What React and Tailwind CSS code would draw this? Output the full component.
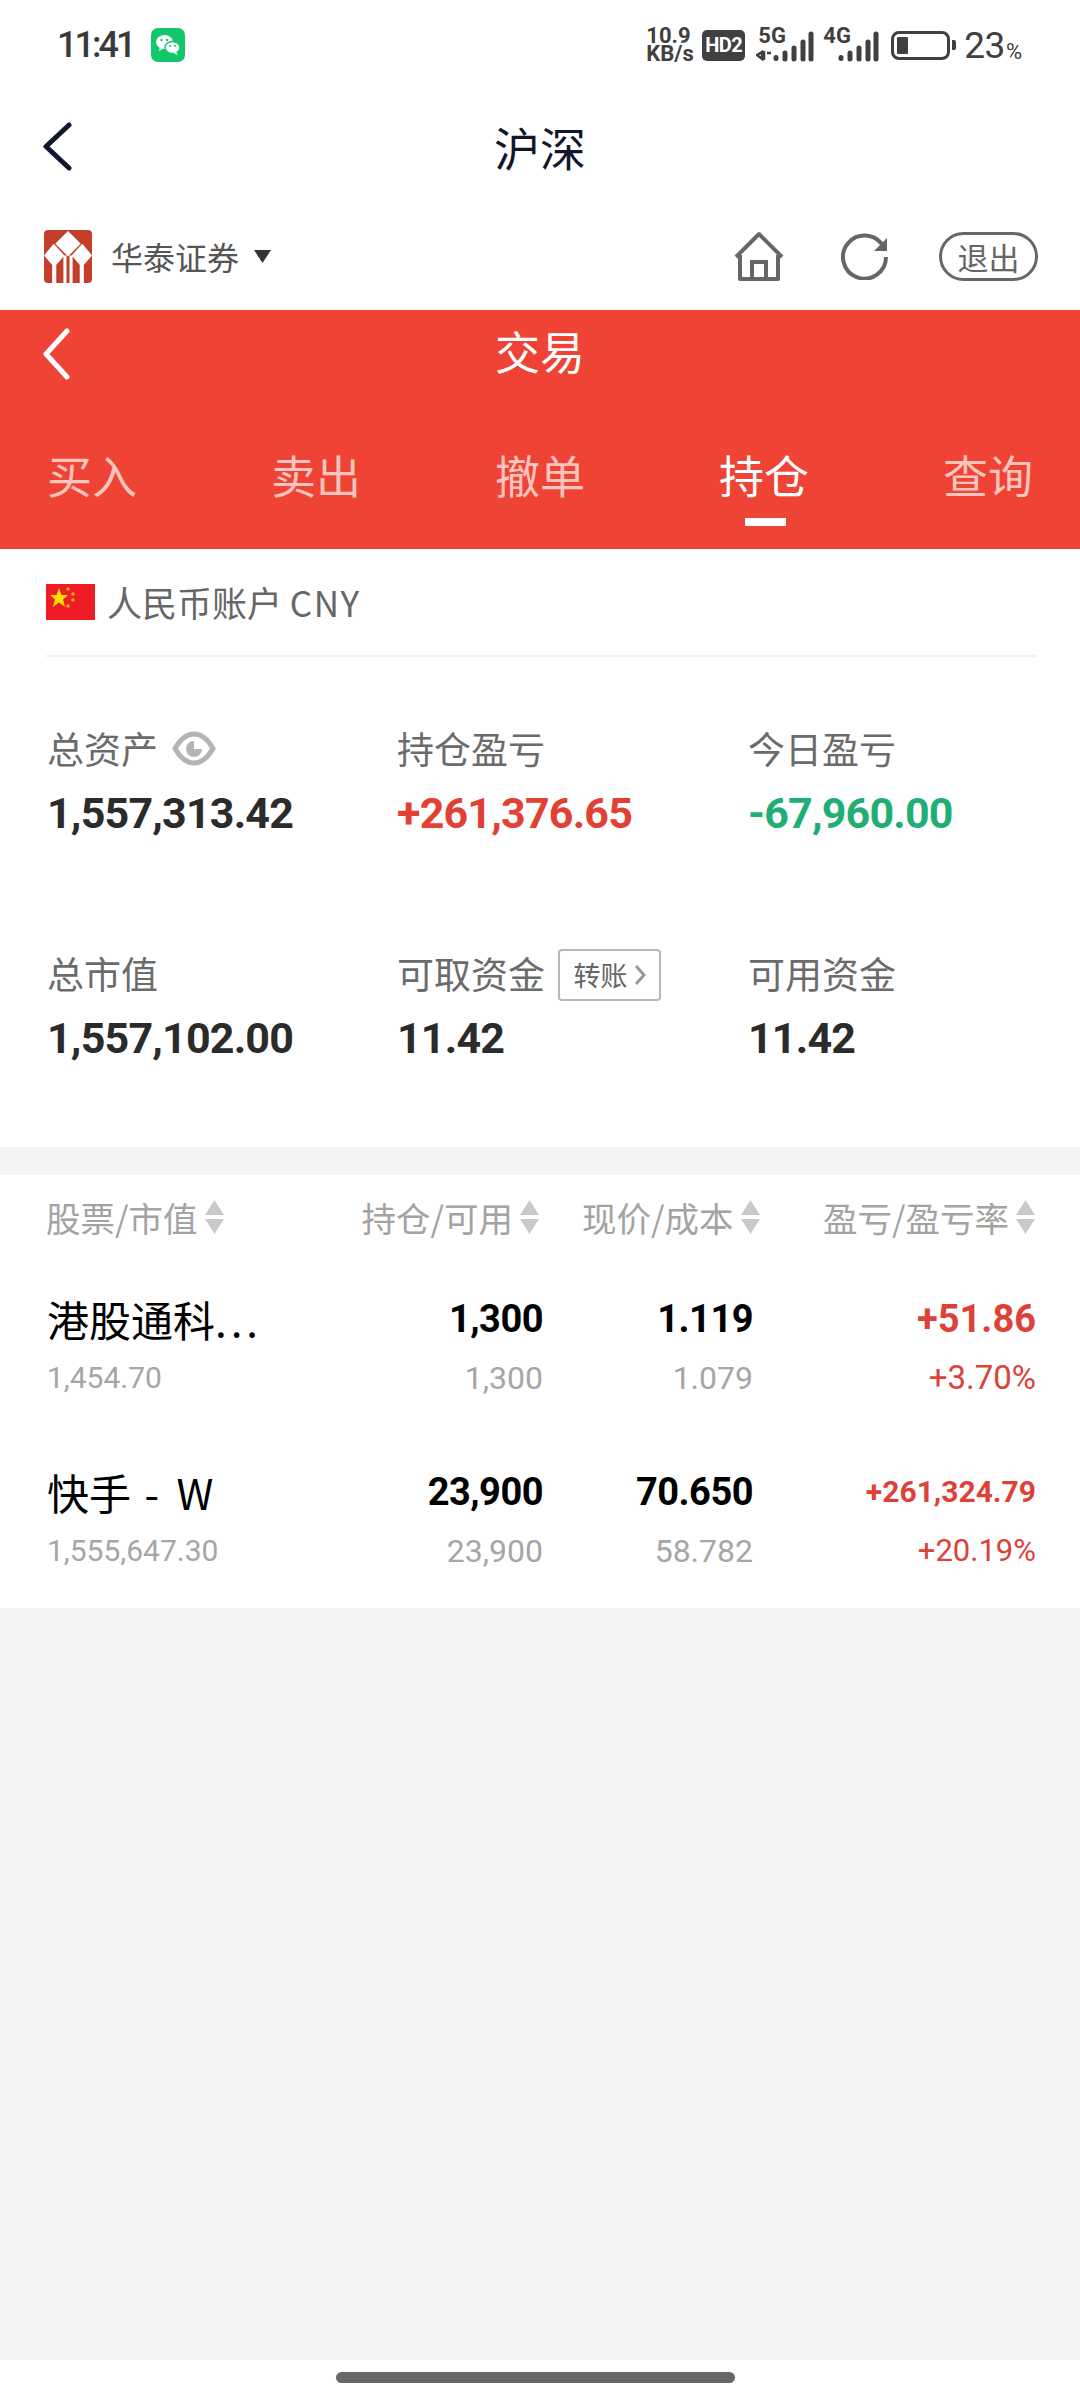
import React from 'react';

const cjk = "font-['Noto_Sans_CJK_SC','Noto_Sans',sans-serif]";
const numFont = "font-['Roboto',sans-serif]";

const SortArrows = () => (
    <svg width="21" height="34" viewBox="0 0 21 34" className="shrink-0">
        <path d="M10.5 0 L20 15 H1 Z M10.5 34 L20 19 H1 Z" fill="#c9c9c9" />
    </svg>
);

const Signal = ({ tag, lte }) => (
    <div className="relative w-[58px] h-[34px]">
        <span className="absolute left-[2px] top-[-3px] text-[22px] leading-[22px] font-bold text-[#404040] font-['Roboto',sans-serif]">{tag}</span>
        <svg width="58" height="34" viewBox="0 0 58 34" className="absolute left-0 top-0">
            <g stroke="#404040" strokeWidth="5" strokeLinecap="round">
                <path d="M20 29.5v1M29 25v6M38 20v11M47 14v17M55 6v25" />
            </g>
            {lte && <path d="M1 27l5-3v7zM8 23v9M11 25h4" stroke="#404040" strokeWidth="2.5" fill="none" />}
        </svg>
    </div>
);

const StatusBar = () => (
    <div className="h-[90px] flex items-center justify-between pl-[57px] pr-[58px] bg-white">
        <div className="flex items-center gap-[18px]">
            <span className="text-[36px] leading-none font-medium text-[#3a3a3a] font-['Roboto',sans-serif] tracking-[-3px]">11:41</span>
            <div className="w-[34px] h-[34px] rounded-[7px] bg-[#12c76a] flex items-center justify-center">
                <svg width="26" height="22" viewBox="0 0 26 22">
                    <ellipse cx="9.5" cy="8" rx="8.5" ry="7" fill="#fff" />
                    <path d="M5 13l-1 4 5-3z" fill="#fff" />
                    <ellipse cx="17.5" cy="13.5" rx="7.5" ry="6" fill="#fff" stroke="#12c76a" strokeWidth="1.5" />
                    <path d="M21 18l2 3-5-2z" fill="#fff" />
                    <circle cx="6.5" cy="6" r="1.2" fill="#12c76a" />
                    <circle cx="12" cy="6" r="1.2" fill="#12c76a" />
                    <circle cx="15" cy="12" r="1" fill="#12c76a" />
                    <circle cx="20" cy="12" r="1" fill="#12c76a" />
                </svg>
            </div>
        </div>
        <div className="flex items-center font-['Roboto',sans-serif] text-[#404040]">
            <div className="flex flex-col items-start font-bold text-[22px] leading-[18px] w-[54px]">
                <span>10.9</span>
                <span>KB/s</span>
            </div>
            <div className="ml-[2px] w-[43px] h-[31px] rounded-[5px] bg-[#404040] text-white text-[20px] font-bold flex items-center justify-center leading-none tracking-[-0.5px]">HD2</div>
            <div className="ml-[11px]"><Signal tag="5G" lte /></div>
            <div className="ml-[7px]"><Signal tag="4G" /></div>
            <div className="ml-[12px] flex items-center">
                <div className="w-[59px] h-[29px] rounded-[8px] border-[3px] border-[#404040] p-[3px]">
                    <div className="w-[11px] h-full bg-[#404040] rounded-[1px]" />
                </div>
                <div className="ml-[2px] w-[4px] h-[10px] bg-[#404040] rounded-r-[2px]" />
            </div>
            <span className="ml-[8px] text-[37px] leading-none tracking-[-0.5px]">23</span>
            <span className="ml-[1px] text-[22px] leading-none self-end mb-[1px]">%</span>
        </div>
    </div>
);

const TopNav = () => (
    <div className="relative h-[112px] flex items-center justify-center bg-white">
        <svg width="30" height="49" viewBox="0 0 30 49" className="absolute left-[42px] top-[32px]">
            <path d="M27 3 L4 24.5 L27 46" fill="none" stroke="#10172a" strokeWidth="5" strokeLinecap="round" strokeLinejoin="round" />
        </svg>
        <span className="text-[46px] leading-none text-[#10172a]">沪深</span>
    </div>
);

const BrokerRow = () => (
    <div className="h-[108px] flex items-center justify-between pl-[44px] pr-[42px] bg-white">
        <div className="flex items-center">
            <svg width="48" height="53" viewBox="0 0 47 54" preserveAspectRatio="none">
                <rect width="47" height="54" rx="4" fill="#c33f2c" />
                <path d="M23.5 1 L36 14 L23.5 27 L11 14 Z" fill="#fff" />
                <path d="M9.5 14 L20 26 L10 38 L0 26 Z" fill="#fff" />
                <path d="M37.5 14 L47 26 L37 38 L27 26 Z" fill="#fff" />
                <path d="M8 36h4v18H8zM35 36h4v18h-4zM19 26h3v28h-3zM25 26h3v28h-3z" fill="#fff" />
            </svg>
            <span className="ml-[19px] text-[32px] leading-none text-[#555]">华泰证券</span>
            <svg width="17" height="13" viewBox="0 0 16 13" className="ml-[15px]" preserveAspectRatio="none">
                <path d="M0 0H16L8 13Z" fill="#333" />
            </svg>
        </div>
        <div className="flex items-center">
            <svg width="50" height="50" viewBox="0 0 50 50" fill="none" stroke="#666" strokeWidth="4">
                <path d="M2 26 L25 3 L48 26 M6 24 V48 H44 V24" strokeLinejoin="round" />
                <path d="M18 48 V31 H32 V48" />
            </svg>
            <svg width="48" height="48" viewBox="0 0 48 48" fill="none" className="ml-[57px]">
                <path d="M43 16 A21.5 21.5 0 1 0 45 25" stroke="#666" strokeWidth="4" />
                <path d="M46 6 V19 H33 Z" fill="#666" />
            </svg>
            <div className="ml-[50px] w-[99px] h-[49px] rounded-full border-[3px] border-[#666] flex items-center justify-center text-[31px] leading-none text-[#666]">退出</div>
        </div>
    </div>
);

const TABS = ['买入', '卖出', '撤单', '持仓', '查询'];

const TradeHeader = () => (
    <div className="h-[239px] bg-[#ee4335] text-white flex flex-col">
        <div className="relative h-[90px] flex items-center justify-center">
            <svg width="32" height="52" viewBox="0 0 32 52" className="absolute left-[41px] top-[18px]">
                <path d="M26 3 L5 26 L26 49" fill="none" stroke="#fff" strokeWidth="5" strokeLinecap="round" strokeLinejoin="round" />
            </svg>
            <span className="text-[45px] leading-none mt-[-10px]">交易</span>
        </div>
        <div className="flex justify-between px-[47px] mt-[52px]">
            {TABS.map((tab, i) => (
                <div key={tab} className="relative">
                    <span className={`block text-[45px] leading-[45px] ${i === 3 ? 'text-white' : 'text-[#fbc4bd]'}`}>{tab}</span>
                    {i === 3 && <div className="absolute left-[26px] top-[66px] w-[41px] h-[8px] bg-white" />}
                </div>
            ))}
        </div>
    </div>
);

const Stat = ({ label, value, color = 'text-[#2b2b2b]', children }) => (
    <div className="flex-col flex">
        <div className="h-[52px] flex items-center">
            <span className="text-[37px] leading-none text-[#6b6b6b]">{label}</span>
            {children}
        </div>
        <span className={`mt-[14px] text-[43px] leading-[50px] font-bold ${numFont} tracking-[-0.8px] ${color}`}>{value}</span>
    </div>
);

const EyeIcon = () => (
    <svg width="44" height="35" viewBox="0 0 44 35" fill="none" className="ml-[14px]">
        <path d="M3 17.5 C9 7 16 3 22 3 C28 3 35 7 41 17.5 C35 28 28 32 22 32 C16 32 9 28 3 17.5 Z" stroke="#b4b4b4" strokeWidth="5" />
        <path d="M22 10 A8 8 0 1 0 30 18 L22 18 Z" fill="#b4b4b4" />
    </svg>
);

const AccountSection = () => (
    <div className="h-[598px] bg-white">
        <div className="ml-[46px] mr-[44px] h-[108px] border-b-2 border-[#f0f0f0] flex items-center">
            <svg width="49" height="36" viewBox="0 0 49 36">
                <rect width="49" height="36" fill="#ee1c25" />
                <path d="M14 7 L16.5 14 H23 L18 18.5 L20 26 L14 21.5 L8 26 L10 18.5 L5 14 H11.5 Z" fill="#ffde00" transform="translate(-1 -3)" />
                <circle cx="22" cy="5" r="1.8" fill="#f7a21c" />
                <circle cx="27" cy="10" r="1.8" fill="#f7a21c" />
                <circle cx="27" cy="16" r="1.8" fill="#f7a21c" />
                <circle cx="22" cy="22" r="1.8" fill="#f7a21c" />
            </svg>
            <span className="ml-[12px] mb-[2px] text-[35px] leading-none text-[#666]">人民币账户 <span className="tracking-[1.5px]">CNY</span></span>
        </div>
        <div className="grid grid-cols-[350px_351px_1fr] pl-[47px] pt-[65px] gap-y-[109px]">
            <Stat label="总资产" value="1,557,313.42"><EyeIcon /></Stat>
            <Stat label="持仓盈亏" value="+261,376.65" color="text-[#e23f35]" />
            <Stat label="今日盈亏" value="-67,960.00" color="text-[#1fae74]" />
            <Stat label="总市值" value="1,557,102.00" />
            <Stat label="可取资金" value="11.42">
                <div className="ml-[13px] mt-[3px] w-[103px] h-[52px] border-2 border-[#b8b8b8] rounded-[4px] flex items-center justify-center text-[27px] leading-none text-[#666]">
                    转账
                    <svg width="12" height="22" viewBox="0 0 12 22" className="ml-[6px]">
                        <path d="M2 2 L10 11 L2 20" fill="none" stroke="#999" strokeWidth="3" />
                    </svg>
                </div>
            </Stat>
            <Stat label="可用资金" value="11.42" />
        </div>
    </div>
);

const COLUMNS = [
    { label: '股票/市值', cls: '' },
    { label: '持仓/可用', cls: 'ml-[137px]' },
    { label: '现价/成本', cls: 'ml-[42px]' },
    { label: '盈亏/盈亏率', cls: 'ml-auto' },
];

const ROWS = [
    { name: '港股通科', tail: '...', value: '1,454.70', qty: '1,300', avail: '1,300', price: '1.119', cost: '1.079', pnl: '+51.86', rate: '+3.70%', big: true },
    { name: '快手', tail: ' - W', value: '1,555,647.30', qty: '23,900', avail: '23,900', price: '70.650', cost: '58.782', pnl: '+261,324.79', rate: '+20.19%', big: false },
];

const NumCell = ({ main, sub, w }) => (
    <div className={`${w} flex flex-col items-end ${numFont}`}>
        <span className="text-[38px] leading-[60px] font-bold text-black tracking-[-0.5px]">{main}</span>
        <span className="mt-[4px] text-[32px] leading-[50px] text-[#a6a6a6]">{sub}</span>
    </div>
);

const HoldingTable = () => (
    <div className="bg-white h-[433px]">
        <div className="h-[84px] flex items-center pl-[46px] pr-[44px]">
            {COLUMNS.map((col) => (
                <div key={col.label} className={`flex items-center gap-[6px] ${col.cls}`}>
                    <span className="text-[34.5px] leading-none text-[#a3a3a3] whitespace-nowrap">{col.label}</span>
                    <SortArrows />
                </div>
            ))}
        </div>
        {ROWS.map((row) => (
            <div key={row.value} className="h-[173px] pt-[30px] pl-[47px] pr-[44px] flex">
                <div className="w-[300px] flex flex-col">
                    <span className="text-[42px] leading-[60px] text-black whitespace-pre">
                        {row.name}<span className="tracking-[4px]">{row.tail}</span>
                    </span>
                    <span className={`mt-[4px] text-[30px] leading-[50px] text-[#a6a6a6] ${numFont}`}>{row.value}</span>
                </div>
                <NumCell main={row.qty} sub={row.avail} w="w-[196px]" />
                <NumCell main={row.price} sub={row.cost} w="w-[210px]" />
                <div className={`flex-1 flex flex-col items-end ${numFont}`}>
                    <span className={`font-bold leading-[60px] text-[#dc4238] ${row.big ? 'text-[38px]' : 'text-[30px]'}`}>{row.pnl}</span>
                    <span className={`mt-[4px] leading-[50px] text-[#dc4238] ${row.big ? 'text-[33px]' : 'text-[31px]'}`}>{row.rate}</span>
                </div>
            </div>
        ))}
    </div>
);

export default function App() {
    return (
        <div className={`w-[1080px] h-[2400px] bg-[#f3f4f6] flex flex-col overflow-hidden ${cjk}`}>
            <StatusBar />
            <TopNav />
            <BrokerRow />
            <TradeHeader />
            <AccountSection />
            <div className="h-[28px] shrink-0" />
            <HoldingTable />
            <div className="flex-1" />
            <div className="h-[40px] bg-white pl-[336px] pt-[12px]">
                <div className="w-[399px] h-[11px] rounded-full bg-[#686868]" />
            </div>
        </div>
    );
}
